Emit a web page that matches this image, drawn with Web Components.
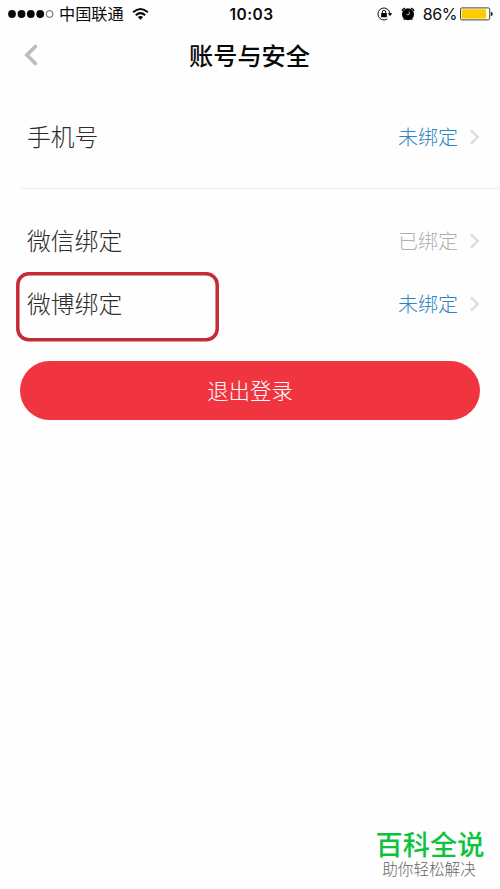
<!DOCTYPE html>
<html lang="zh-CN">
<head>
<meta charset="utf-8">
<title>账号与安全</title>
<style>
html,body{margin:0;padding:0;background:#fefefe}
body{width:500px;height:889px;overflow:hidden;font-family:"Noto Sans CJK SC",sans-serif}
</style>
</head>
<body>
<account-page></account-page>
<script>
function define(name, html) {
  customElements.define(name, class extends HTMLElement {
    constructor() {
      super();
      this.attachShadow({mode: 'open'}).innerHTML = html;
    }
  });
}

define('status-bar', `
<style>
:host{display:grid;grid-template-columns:1fr auto 1fr;align-items:center;height:28px;padding:0 7px 0 8px;color:#0b0b0b;font:16px/28px "Noto Sans CJK SC",sans-serif}
svg{display:block;flex:none}
.left,.right{display:flex;align-items:center}
.right{justify-content:flex-end}
.carrier{margin-left:5px;font-size:16.2px;line-height:26px;padding-bottom:2px}
.wifi{margin-left:8px;margin-top:-1px}
.time{font:600 15.5px/27px Inter,sans-serif;letter-spacing:.45px;padding:1px 0 0 2px}
.alarm{margin-left:8px}
.pct{font:16px/28px Inter,sans-serif;margin:0 3px 0 8px;letter-spacing:-.45px}
</style>
<div class="left">
<svg width="46" height="12" viewBox="0 0 46 12"><g fill="#080808"><circle cx="4" cy="6" r="3.9"/><circle cx="13.5" cy="6" r="3.9"/><circle cx="22.8" cy="6" r="3.9"/><circle cx="32.2" cy="6" r="3.9"/></g><circle cx="41.6" cy="6" r="3.4" fill="none" stroke="#333" stroke-width=".8"/></svg>
<span class="carrier">中国联通</span>
<svg class="wifi" width="17" height="14" viewBox="0 0 17 14"><g fill="none" stroke="#080808" stroke-width="2"><path d="M1.1 5.3Q8.5-1.3 15.9 5.3"/><path d="M3.8 8.2Q8.5 4.1 13.2 8.2"/></g><path d="M5.9 10.1Q8.5 8 11.1 10.1L8.5 12.8Z"/></svg>
</div>
<span class="time">10:03</span>
<div class="right">
<svg width="16" height="14" viewBox="0 0 16 14"><path d="M12.9 6.4A6 6 0 1 0 10.5 11.8" fill="none" stroke="#111" stroke-width="1"/><path d="M10.6 6.2h4.8L13 9Z"/><rect x="4.2" y="6" width="5.6" height="4.3" rx=".4"/><path d="M5.3 6.5V5a1.7 1.7 0 0 1 3.4 0v1.5" fill="none" stroke="#111" stroke-width="1"/></svg>
<svg class="alarm" width="14" height="14" viewBox="0 0 14 14"><circle cx="7" cy="7.2" r="6"/><path d="M1.1 4Q1.5 1.8 4 1.2M12.9 4Q12.5 1.8 10 1.2" fill="none" stroke="#111" stroke-width="1.5"/><path d="M3.6 11.4 2.7 12.9M10.4 11.4l.9 1.5" stroke="#111" stroke-width="1.3"/><path d="M8.2 4.6V7.6H5.6" fill="none" stroke="#ddd" stroke-width=".8"/></svg>
<span class="pct">86%</span>
<svg width="33" height="14" viewBox="0 0 33 14"><rect x=".5" y=".9" width="29.2" height="12" rx="1.4" fill="#fff" stroke="#2c2c24" stroke-width=".9"/><rect x="1.8" y="2.2" width="24.4" height="9.4" fill="#fc0"/><path d="M30.8 4.8q2 .3 2 2.1t-2 2.1Z" fill="#222"/></svg>
</div>`);

define('nav-bar', `
<style>
:host{display:grid;grid-template-columns:44px 1fr 44px;align-items:center;height:57px;box-sizing:border-box;border-bottom:1px solid #fbfbfb;padding:0 1px 2px 0;background:#fefefe}
svg{display:block;margin-left:22px}
h1{margin:0;text-align:center;font-size:24.2px;line-height:36px;font-weight:500;color:#080808}
</style>
<svg width="18" height="24" viewBox="0 0 18 24"><path d="M13.4 3.5 4.9 12 13.4 20.5" fill="none" stroke="#bdbdbd" stroke-width="3.7" stroke-linecap="round"/></svg>
<h1><slot></slot></h1>`);

define('setting-row', `
<style>
:host{display:flex;align-items:center;height:var(--row-height,63px);padding:0 20px 0 27px}
.label{flex:1;font-size:23.8px;font-weight:300;line-height:34px;padding-bottom:2px;color:#2b2b2b}
.value{font-size:20px;font-weight:300;line-height:30px;color:#2e86c1}
:host([bound]) .value{color:#b0b0b0}
svg{display:block;margin-left:11px}
</style>
<span class="label"><slot></slot></span>
<span class="value"><slot name="value"></slot></span>
<svg width="11" height="18" viewBox="0 0 11 18"><path d="M2 2.5 8.8 9 2 15.5" fill="none" stroke="#dedede" stroke-width="2.5"/></svg>`);

define('setting-group', `
<style>
:host{display:block}
:host([divided]){background:linear-gradient(#eee,#eee) 20px 100%/480px 1px no-repeat;padding-bottom:1px}
</style><slot></slot>`);

define('focus-frame', `
<style>
:host{display:block;position:relative}
i{position:absolute;left:16px;top:0;width:203px;height:70px}
svg{display:block}
</style><slot></slot>
<i><svg width="203" height="70" viewBox="0 0 203 70"><rect x="1.8" y="1.7" width="199.4" height="66" rx="11" fill="none" stroke="#c52b35" stroke-width="3.5"/></svg></i>`);

define('action-button', `
<style>
:host{display:block;margin:0 20px}
button{display:block;width:100%;height:59px;border:0;border-radius:30px;padding:0 0 1px;background:#f03541;color:#fff;font:300 21.4px/58px "Noto Sans CJK SC",sans-serif}
</style><button><slot></slot></button>`);

define('brand-mark', `
<style>
:host{display:flex;flex-direction:column;align-items:center;width:110px;font-family:"Liberation Sans","Noto Sans CJK SC",sans-serif}
b{font-size:27.2px;line-height:29px;font-weight:500;color:#0bc43b;white-space:nowrap}
span{font-size:15.6px;line-height:19px;font-weight:300;color:#666;white-space:nowrap;padding-right:2px}
</style><b><slot></slot></b><span><slot name="tagline"></slot></span>`);

define('account-page', `
<style>
:host{display:flex;flex-direction:column;width:500px;height:889px;background:#fefefe}
.phone{--row-height:103px}
.links{margin-top:20px}
action-button{margin-top:26px}
brand-mark{margin:auto 15px 10px auto}
</style>
<status-bar></status-bar>
<nav-bar>账号与安全</nav-bar>
<setting-group class="phone" divided><setting-row>手机号<span slot="value">未绑定</span></setting-row></setting-group>
<setting-group class="links">
<setting-row bound>微信绑定<span slot="value">已绑定</span></setting-row>
<focus-frame><setting-row>微博绑定<span slot="value">未绑定</span></setting-row></focus-frame>
</setting-group>
<action-button>退出登录</action-button>
<brand-mark>百科全说<span slot="tagline">助你轻松解决</span></brand-mark>`);
</script>
</body>
</html>
